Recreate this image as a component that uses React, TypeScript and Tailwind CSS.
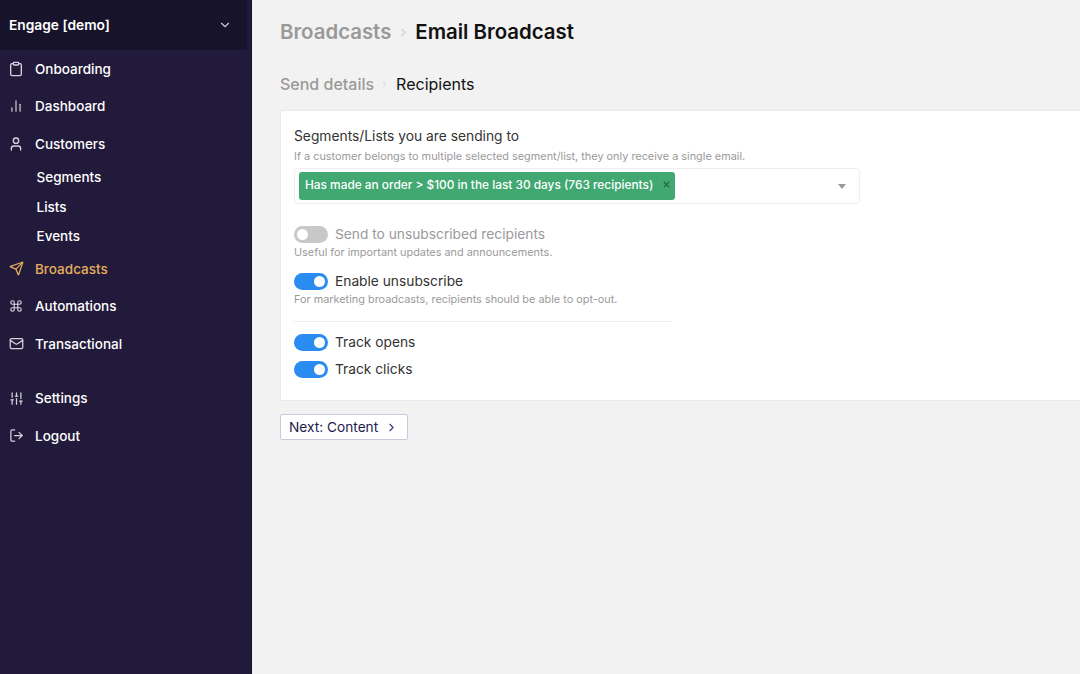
import { BarChart2, ChevronDown, ChevronRight, Clipboard, Command, LogOut, Mail, Send, Sliders, User, X } from "lucide-react";
import type { ReactNode } from "react";

function Nav({ icon, label, active }: { icon: ReactNode; label: string; active?: boolean }) {
  return (
    <div className={`flex h-[37.5px] items-center pl-[8px] text-[13.5px] font-medium ${active ? "text-[#e4ad5c]" : "text-white"}`}>
      <span className={`flex w-[16px] justify-center ${active ? "text-[#e4ad5c]" : "text-[#d5d3dc]"}`}>{icon}</span>
      <span className="ml-[11px]">{label}</span>
    </div>
  );
}

function Sub({ label }: { label: string }) {
  return <div className="flex h-[29.5px] items-center pl-[36.5px] text-[13.5px] font-medium text-white">{label}</div>;
}

function Toggle({ on, label, muted }: { on?: boolean; label: string; muted?: boolean }) {
  return (
    <div className="flex h-[17px] items-center">
      <span className={`flex h-[17px] w-[34px] items-center rounded-full px-[3px] ${on ? "justify-end bg-[#2a8cf0]" : "justify-start bg-[#c8c8c8]"}`}>
        <span className="h-[11px] w-[11px] rounded-full bg-white" />
      </span>
      <span className={`ml-[7px] text-[13.75px] ${muted ? "text-[#9a9a9a]" : "text-[#333333]"}`}>{label}</span>
    </div>
  );
}

export default function App() {
  return (
    <div className="flex h-[674px] w-[1080px] overflow-hidden bg-[#f2f2f2] font-['Inter',sans-serif]">
      <aside className="h-full w-[252px] shrink-0 border-r border-[#15122a] bg-[#211a3b]">
        <div className="flex h-[50px] w-[247px] items-center justify-between bg-[#17132b] pl-[9px] pr-[15px] text-[13.75px] font-semibold text-white">
          <span>Engage [demo]</span>
          <ChevronDown size={14} className="text-[#c9c7d2]" />
        </div>
        <Nav icon={<Clipboard size={16} />} label="Onboarding" />
        <Nav icon={<BarChart2 size={14} />} label="Dashboard" />
        <Nav icon={<User size={16} />} label="Customers" />
        <div className="-mb-[1px]">
          <Sub label="Segments" />
          <Sub label="Lists" />
          <Sub label="Events" />
        </div>
        <Nav icon={<Send size={15} />} label="Broadcasts" active />
        <Nav icon={<Command size={14} />} label="Automations" />
        <Nav icon={<Mail size={15} />} label="Transactional" />
        <div className="h-[17px]" />
        <Nav icon={<Sliders size={15} />} label="Settings" />
        <Nav icon={<LogOut size={15} />} label="Logout" />
      </aside>
      <main className="min-w-0 flex-1 pl-[28px]">
        <div className="flex h-[64px] items-center text-[20.4px] font-semibold leading-none">
          <span className="text-[#999999]">Broadcasts</span>
          <ChevronRight size={13} className="ml-[6px] mr-[5px] text-[#d0d0d0]" />
          <span className="text-[#111111]">Email Broadcast</span>
        </div>
        <div className="flex h-[40px] items-center text-[16px] font-medium leading-none">
          <span className="text-[#999999]">Send details</span>
          <ChevronRight size={11} className="mx-[5px] text-[#d0d0d0]" />
          <span className="ml-[1px] font-normal text-[#111111]">Recipients</span>
        </div>
        <section className="mt-[6px] h-[291px] w-[800px] rounded-l-[2px] border border-r-0 border-[#e9e9e9] bg-white pl-[13px] pt-[16px]">
          <div className="text-[13.8px] leading-[19px] text-[#333333]">Segments/Lists you are sending to</div>
          <div className="mt-[3px] text-[10.88px] leading-[14px] text-[#9a9a9a]">If a customer belongs to multiple selected segment/list, they only receive a single email.</div>
          <div className="mt-[5px] flex h-[36px] w-[566px] items-center justify-between rounded-[4px] border border-[#eeeeee] pl-[4px] pr-[13px]">
            <span className="flex h-[28px] w-[376px] items-center justify-between rounded-[3px] bg-[#41a871] pl-[6px] pr-[4px] text-[11.86px] font-medium text-white">
              <span>Has made an order &gt; $100 in the last 30 days (763 recipients)</span>
              <X size={9} strokeWidth={4} className="mb-[3px] text-[#2b6b4a]" />
            </span>
            <span className="h-0 w-0 border-x-[4.5px] border-t-[5px] border-x-transparent border-t-[#999999]" />
          </div>
          <div className="mt-[22px]"><Toggle label="Send to unsubscribed recipients" muted /></div>
          <div className="mt-[1px] text-[10.88px] leading-[17px] text-[#9a9a9a]">Useful for important updates and announcements.</div>
          <div className="mt-[12px]"><Toggle on label="Enable unsubscribe" /></div>
          <div className="mt-[1px] text-[10.88px] leading-[17px] text-[#9a9a9a]">For marketing broadcasts, recipients should be able to opt-out.</div>
          <div className="mt-[13px] h-px w-[377px] bg-[#eeeeee]" />
          <div className="mt-[11.5px]"><Toggle on label="Track opens" /></div>
          <div className="mt-[10px]"><Toggle on label="Track clicks" /></div>
        </section>
        <button className="mt-[13px] flex h-[26px] w-[128px] items-center rounded-[2px] border border-[#c9c9e2] bg-white pl-[8px] text-[13.7px] text-[#1d1a4b]">
          Next: Content
          <ChevronRight size={13} className="ml-[7px] text-[#3a3a7a]" />
        </button>
      </main>
    </div>
  );
}
